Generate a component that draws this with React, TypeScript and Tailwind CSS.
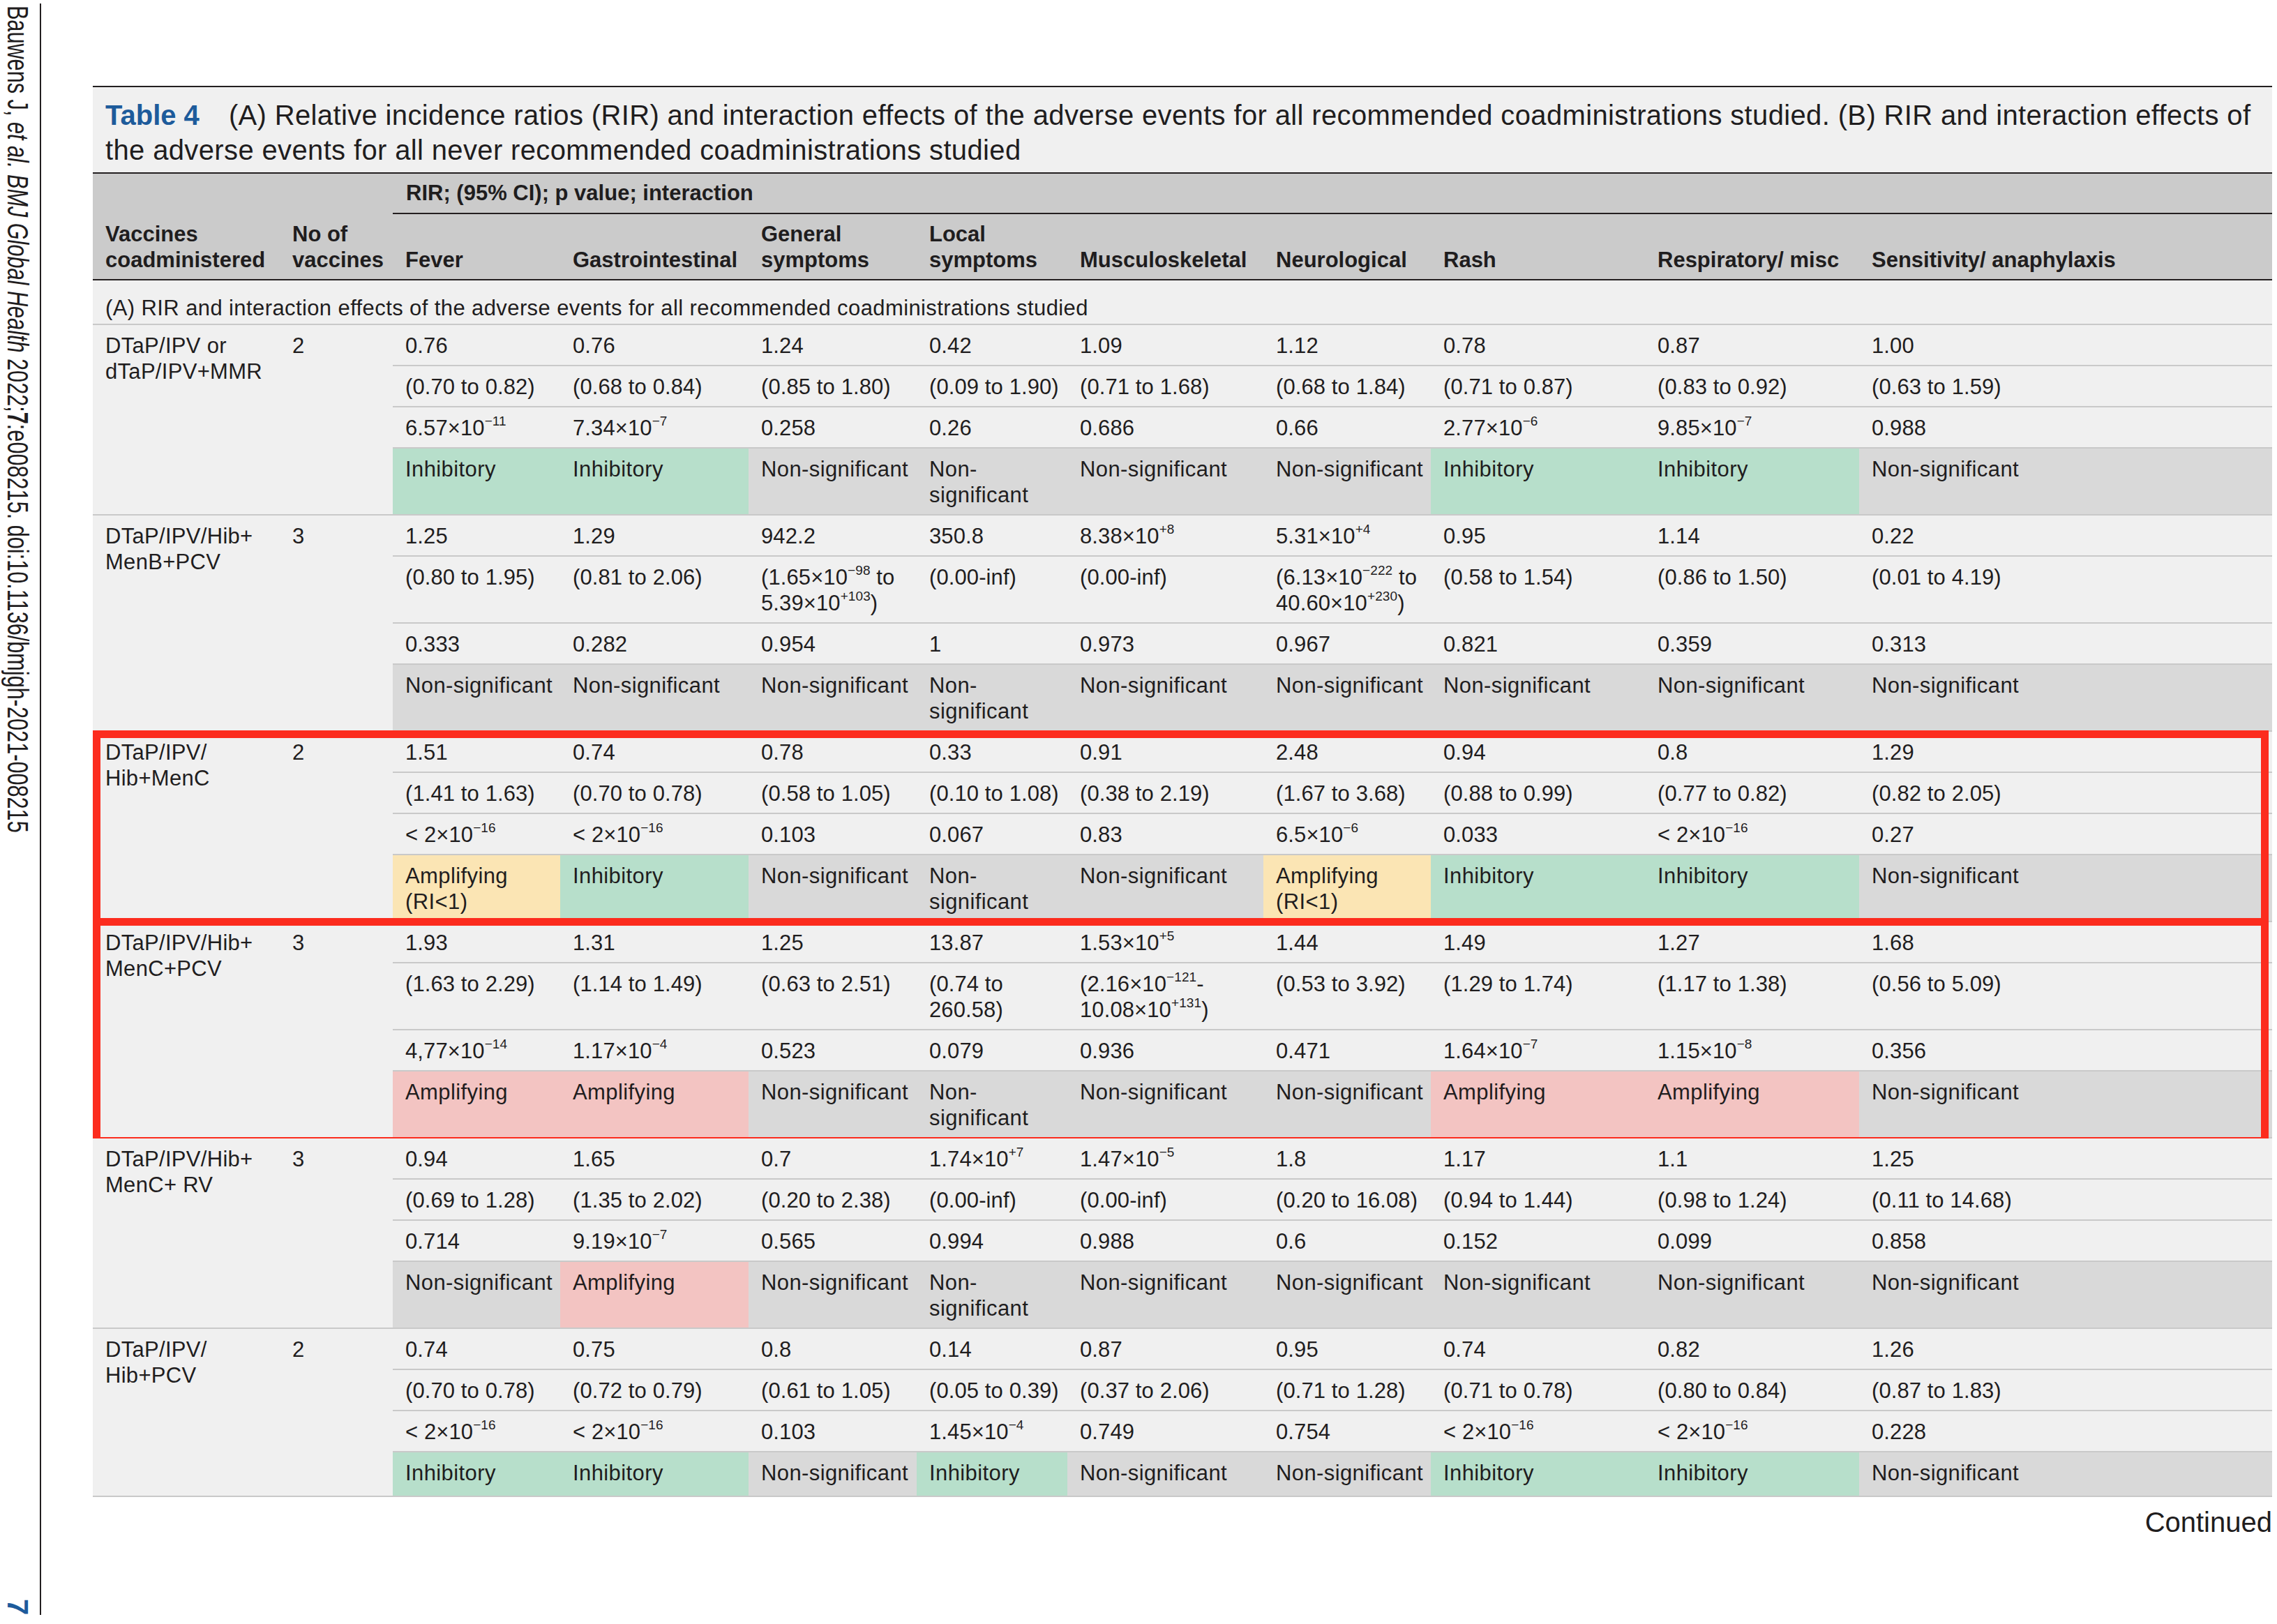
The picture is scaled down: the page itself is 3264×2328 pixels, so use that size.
import type {ReactNode} from "react";

const COLS = "grid grid-cols-[267px_163px_240px_270px_241px_216px_281px_240px_307px_307px_592px]";

type Kind = "G" | "Y" | "P" | "N";

const kindBg: Record<Kind, string> = {
    G: "bg-[#b7dfcb]",
    Y: "bg-[#fbe5b4]",
    P: "bg-[#f3c4c2]",
    N: "bg-[#d9d9d9]",
};

// number with a power of ten, e.g. 6.57x10^-11
const sx = (base: string, exp: string) => (
    <>
        {base}
        <sup className="text-[19px] top-[-14px]">{exp}</sup>
    </>
);

const NS = "Non-significant";
const NS2 = <>Non-<br/>significant</>;
const AMP_RI = <>Amplifying<br/>(RI&lt;1)</>;
const LT16 = sx("< 2×10", "−16");

type Group = {
    name: ReactNode;
    n: string;
    rows: ReactNode[][];
    inter: [Kind, ReactNode][];
    box?: "a" | "b";
};

const groups: Group[] = [
    {
        name: <>DTaP/IPV or<br/>dTaP/IPV+MMR</>,
        n: "2",
        rows: [
            ["0.76", "0.76", "1.24", "0.42", "1.09", "1.12", "0.78", "0.87", "1.00"],
            ["(0.70 to 0.82)", "(0.68 to 0.84)", "(0.85 to 1.80)", "(0.09 to 1.90)", "(0.71 to 1.68)", "(0.68 to 1.84)", "(0.71 to 0.87)", "(0.83 to 0.92)", "(0.63 to 1.59)"],
            [sx("6.57×10", "−11"), sx("7.34×10", "−7"), "0.258", "0.26", "0.686", "0.66", sx("2.77×10", "−6"), sx("9.85×10", "−7"), "0.988"],
        ],
        inter: [["G", "Inhibitory"], ["G", "Inhibitory"], ["N", NS], ["N", NS2], ["N", NS], ["N", NS], ["G", "Inhibitory"], ["G", "Inhibitory"], ["N", NS]],
    },
    {
        name: <>DTaP/IPV/Hib+<br/>MenB+PCV</>,
        n: "3",
        rows: [
            ["1.25", "1.29", "942.2", "350.8", sx("8.38×10", "+8"), sx("5.31×10", "+4"), "0.95", "1.14", "0.22"],
            [
                "(0.80 to 1.95)",
                "(0.81 to 2.06)",
                <>(1.65×10<sup className="text-[19px] top-[-14px]">−98</sup> to<br/>5.39×10<sup className="text-[19px] top-[-14px]">+103</sup>)</>,
                "(0.00-inf)",
                "(0.00-inf)",
                <>(6.13×10<sup className="text-[19px] top-[-14px]">−222</sup> to<br/>40.60×10<sup className="text-[19px] top-[-14px]">+230</sup>)</>,
                "(0.58 to 1.54)",
                "(0.86 to 1.50)",
                "(0.01 to 4.19)",
            ],
            ["0.333", "0.282", "0.954", "1", "0.973", "0.967", "0.821", "0.359", "0.313"],
        ],
        inter: [["N", NS], ["N", NS], ["N", NS], ["N", NS2], ["N", NS], ["N", NS], ["N", NS], ["N", NS], ["N", NS]],
    },
    {
        name: <>DTaP/IPV/<br/>Hib+MenC</>,
        n: "2",
        rows: [
            ["1.51", "0.74", "0.78", "0.33", "0.91", "2.48", "0.94", "0.8", "1.29"],
            ["(1.41 to 1.63)", "(0.70 to 0.78)", "(0.58 to 1.05)", "(0.10 to 1.08)", "(0.38 to 2.19)", "(1.67 to 3.68)", "(0.88 to 0.99)", "(0.77 to 0.82)", "(0.82 to 2.05)"],
            [LT16, LT16, "0.103", "0.067", "0.83", sx("6.5×10", "−6"), "0.033", LT16, "0.27"],
        ],
        inter: [["Y", AMP_RI], ["G", "Inhibitory"], ["N", NS], ["N", NS2], ["N", NS], ["Y", AMP_RI], ["G", "Inhibitory"], ["G", "Inhibitory"], ["N", NS]],
        box: "a",
    },
    {
        name: <>DTaP/IPV/Hib+<br/>MenC+PCV</>,
        n: "3",
        rows: [
            ["1.93", "1.31", "1.25", "13.87", sx("1.53×10", "+5"), "1.44", "1.49", "1.27", "1.68"],
            [
                "(1.63 to 2.29)",
                "(1.14 to 1.49)",
                "(0.63 to 2.51)",
                <>(0.74 to<br/>260.58)</>,
                <>(2.16×10<sup className="text-[19px] top-[-14px]">−121</sup>-<br/>10.08×10<sup className="text-[19px] top-[-14px]">+131</sup>)</>,
                "(0.53 to 3.92)",
                "(1.29 to 1.74)",
                "(1.17 to 1.38)",
                "(0.56 to 5.09)",
            ],
            [sx("4,77×10", "−14"), sx("1.17×10", "−4"), "0.523", "0.079", "0.936", "0.471", sx("1.64×10", "−7"), sx("1.15×10", "−8"), "0.356"],
        ],
        inter: [["P", "Amplifying"], ["P", "Amplifying"], ["N", NS], ["N", NS2], ["N", NS], ["N", NS], ["P", "Amplifying"], ["P", "Amplifying"], ["N", NS]],
        box: "b",
    },
    {
        name: <>DTaP/IPV/Hib+<br/>MenC+ RV</>,
        n: "3",
        rows: [
            ["0.94", "1.65", "0.7", sx("1.74×10", "+7"), sx("1.47×10", "−5"), "1.8", "1.17", "1.1", "1.25"],
            ["(0.69 to 1.28)", "(1.35 to 2.02)", "(0.20 to 2.38)", "(0.00-inf)", "(0.00-inf)", "(0.20 to 16.08)", "(0.94 to 1.44)", "(0.98 to 1.24)", "(0.11 to 14.68)"],
            ["0.714", sx("9.19×10", "−7"), "0.565", "0.994", "0.988", "0.6", "0.152", "0.099", "0.858"],
        ],
        inter: [["N", NS], ["P", "Amplifying"], ["N", NS], ["N", NS2], ["N", NS], ["N", NS], ["N", NS], ["N", NS], ["N", NS]],
    },
    {
        name: <>DTaP/IPV/<br/>Hib+PCV</>,
        n: "2",
        rows: [
            ["0.74", "0.75", "0.8", "0.14", "0.87", "0.95", "0.74", "0.82", "1.26"],
            ["(0.70 to 0.78)", "(0.72 to 0.79)", "(0.61 to 1.05)", "(0.05 to 0.39)", "(0.37 to 2.06)", "(0.71 to 1.28)", "(0.71 to 0.78)", "(0.80 to 0.84)", "(0.87 to 1.83)"],
            [LT16, LT16, "0.103", sx("1.45×10", "−4"), "0.749", "0.754", LT16, LT16, "0.228"],
        ],
        inter: [["G", "Inhibitory"], ["G", "Inhibitory"], ["N", NS], ["G", "Inhibitory"], ["N", NS], ["N", NS], ["G", "Inhibitory"], ["G", "Inhibitory"], ["N", NS]],
    },
];

const heads: ReactNode[] = [
    "Fever",
    "Gastrointestinal",
    <>General<br/>symptoms</>,
    <>Local<br/>symptoms</>,
    "Musculoskeletal",
    "Neurological",
    "Rash",
    "Respiratory/ misc",
    "Sensitivity/ anaphylaxis",
];

function GroupRows({g, last}: { g: Group; last: boolean }) {
    return (
        <div className="relative">
            <div className={`${COLS} border-b-2 border-[#c9c9c9] bg-[#f0f0f0]`}>
                <div className="row-span-4 pl-[18px] pt-[11px] leading-[37px] tracking-[0.3px]">{g.name}</div>
                <div className="row-span-4 pl-[19px] pt-[11px] leading-[37px]">{g.n}</div>
                {g.rows.map((row, i) =>
                    row.map((c, j) => (
                        <div
                            key={`${i}-${j}`}
                            className="border-b-2 border-[#c9c9c9] pl-[18px] pt-[11px] pb-[9px] leading-[37px] whitespace-nowrap tracking-[0.1px]"
                        >
                            {c}
                        </div>
                    ))
                )}
                {g.inter.map(([k, c], j) => (
                    <div
                        key={`i-${j}`}
                        className={`${kindBg[k]} pl-[18px] pt-[11px] ${last ? "pb-[14px]" : "pb-[9px]"} leading-[37px] whitespace-nowrap tracking-[0.4px]`}
                    >
                        {c}
                    </div>
                ))}
            </div>
            {/* red highlight boxes drawn over the table */}
            {g.box === "a" && (
                <div className="pointer-events-none absolute -top-[2px] -bottom-[8px] left-0 right-[5px] border-[11px] border-[#fc2c1e]"/>
            )}
            {g.box === "b" && (
                <div className="pointer-events-none absolute -top-[6px] -bottom-[9px] left-0 right-[5px] border-[11px] border-[#fc2c1e]"/>
            )}
        </div>
    );
}

export default function App() {
    return (
        <div className="w-[3264px] h-[2328px] overflow-hidden bg-white text-[#1f1d1e] font-['Liberation_Sans',Arial,sans-serif] flex">
            {/* LEFT: running footer */}
            <div className="w-[59px] mt-[5px] h-[2310px] border-r-2 border-[#231f20] flex flex-col justify-between">
                <div className="self-start ml-[4px] origin-top scale-y-[0.73] [writing-mode:vertical-rl] text-[42px] leading-[42px] pt-[4px] whitespace-nowrap">
                    Bauwens J, <i>et al. BMJ Global Health</i> 2022;<b>7</b>:e008215. doi:10.1136/bmjgh-2021-008215
                </div>
                <div className="self-start ml-[4px] [writing-mode:vertical-rl] text-[42px] leading-[42px] font-bold text-[#1d5b9b]">7</div>
            </div>

            {/* RIGHT: table */}
            <div className="ml-[74px] w-[3124px] pt-[123px] text-[31px]">
                <div className="border-t-2 border-[#231f20] bg-[#f0f0f0] pl-[18px] pt-[15px] pb-[7px] text-[40px] leading-[50px] whitespace-nowrap tracking-[0.36px]">
                    <span className="font-bold text-[#1d5b9b] mr-[42px] tracking-normal">Table 4</span>
                    (A) Relative incidence ratios (RIR) and interaction effects of the adverse events for all recommended coadministrations studied. (B) RIR and interaction effects of
                    <br/>
                    the adverse events for all never recommended coadministrations studied
                </div>

                <div className={`${COLS} border-t-2 border-b-2 border-[#231f20] bg-[#cbcbcb] font-bold`}>
                    <div className="row-span-2 self-end pl-[18px] pb-[9px] leading-[37px]">Vaccines<br/>coadministered</div>
                    <div className="row-span-2 self-end pl-[19px] pb-[9px] leading-[37px]">No of<br/>vaccines</div>
                    <div className="col-span-9 border-b-2 border-[#231f20] pl-[19px] pt-[9px] pb-[10px] leading-[37px]">
                        RIR; (95% CI); p value; interaction
                    </div>
                    {heads.map((h, i) => (
                        <div key={i} className="self-end pl-[18px] pt-[10px] pb-[9px] leading-[37px] whitespace-nowrap">{h}</div>
                    ))}
                </div>

                <div className="bg-[#f0f0f0] border-b-2 border-[#c9c9c9] pl-[18px] pt-[21px] pb-[4px] leading-[37px] tracking-[0.4px]">
                    (A) RIR and interaction effects of the adverse events for all recommended coadministrations studied
                </div>

                {groups.map((g, i) => (
                    <GroupRows key={i} g={g} last={i === groups.length - 1}/>
                ))}

                <div className="mt-[12px] text-right text-[40px] leading-[48px]">Continued</div>
            </div>
        </div>
    );
}
